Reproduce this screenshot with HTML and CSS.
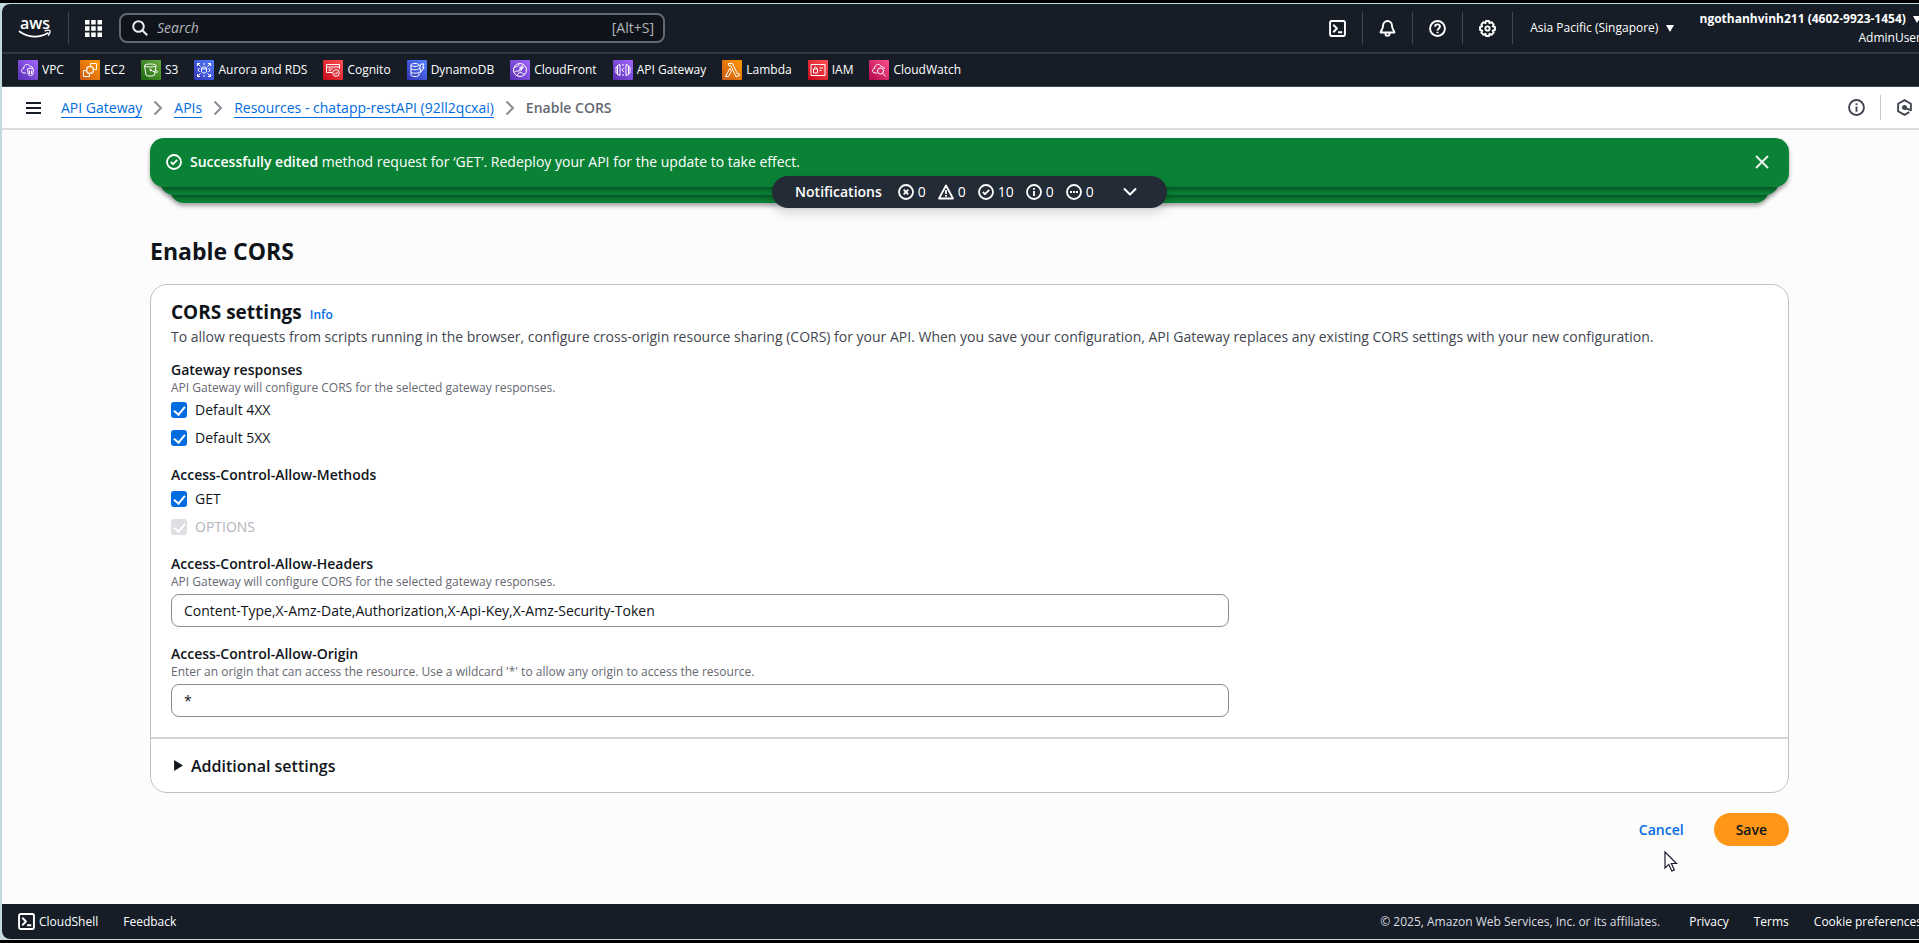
FILE: index.html
```html
<!DOCTYPE html>
<html lang="en">
<head>
<meta charset="utf-8">
<meta name="viewport" content="width=device-width, initial-scale=1">
<title>Enable CORS - API Gateway</title>
<link rel="stylesheet" href="styles.css">
</head>
<body>
<svg class="defs" aria-hidden="true">
  <defs>
    <linearGradient id="g-purple" x1="0" y1="1" x2="1" y2="0"><stop offset="0" stop-color="#5a30b5"/><stop offset="1" stop-color="#a166ff"/></linearGradient>
    <linearGradient id="g-orange" x1="0" y1="1" x2="1" y2="0"><stop offset="0" stop-color="#cc5a18"/><stop offset="1" stop-color="#ff9900"/></linearGradient>
    <linearGradient id="g-green" x1="0" y1="1" x2="1" y2="0"><stop offset="0" stop-color="#1b660f"/><stop offset="1" stop-color="#6cae3e"/></linearGradient>
    <linearGradient id="g-blue" x1="0" y1="1" x2="1" y2="0"><stop offset="0" stop-color="#3334b9"/><stop offset="1" stop-color="#527fff"/></linearGradient>
    <linearGradient id="g-red" x1="0" y1="1" x2="1" y2="0"><stop offset="0" stop-color="#c7081b"/><stop offset="1" stop-color="#ff5252"/></linearGradient>
    <linearGradient id="g-pink" x1="0" y1="1" x2="1" y2="0"><stop offset="0" stop-color="#b0084d"/><stop offset="1" stop-color="#ff4f8b"/></linearGradient>
    <symbol id="i-shell" viewBox="0 0 16 16"><rect x="1" y="1" width="14" height="14" rx="1.5"/><path d="M4 4.500 7.500 8 4 11.500M8.500 11.500h4"/></symbol>
    <symbol id="i-check-circle" viewBox="0 0 16 16"><circle cx="8" cy="8" r="7"/><path d="M4.800 8 7 10.200l4.200-4.400"/></symbol>
    <symbol id="i-info" viewBox="0 0 16 16"><circle cx="8" cy="8" r="7"/><path d="M8 7v5M8 4v1.700"/></symbol>
    <symbol id="i-chevron" viewBox="0 0 16 16"><path d="m4.500 1.500 6.500 6.500-6.500 6.500"/></symbol>
  </defs>
</svg>

<div class="app">
  <header class="topbar">
    <a class="logo" href="#" aria-label="AWS home">
      <svg width="34" height="32" viewBox="0 -6 34 32"><text x="17" y="13" text-anchor="middle" class="logo-text">aws</text><path d="M1.500 15.500c9 6.500 20 6.500 28.500 1.600" fill="none" stroke="#fff" stroke-width="1.700" stroke-linecap="round"/><path d="M27 14.800c2-.7 4-.8 4.700-.2s0 3-1.300 4.700" fill="none" stroke="#fff" stroke-width="1.300" stroke-linecap="round" stroke-linejoin="round"/></svg>
    </a>
    <span class="rule"></span>
    <button class="icon-btn apps" aria-label="Services">
      <svg width="17" height="17" viewBox="0 0 17 17" fill="#fff"><path d="M0 0h4.500v4.500H0zM6.200 0h4.500v4.500H6.200zM12.500 0H17v4.500h-4.500zM0 6.200h4.500v4.500H0zM6.200 6.200h4.500v4.500H6.200zM12.500 6.200H17v4.500h-4.500zM0 12.500h4.500V17H0zM6.200 12.500h4.500V17H6.200zM12.500 12.500H17V17h-4.500z"/></svg>
    </button>
    <label class="search">
      <svg width="16" height="16" viewBox="0 0 16 16" fill="none" stroke="#ebebf0" stroke-width="2"><circle cx="6.500" cy="6.500" r="5.300"/><path d="m10.500 10.500 4.700 4.700"/></svg>
      <input type="text" placeholder="Search" aria-label="Search">
      <span>[Alt+S]</span>
    </label>
    <div class="tools">
      <button class="icon-btn tool" aria-label="CloudShell"><svg class="line" width="17" height="17"><use href="#i-shell"/></svg></button>
      <button class="icon-btn tool" aria-label="Notifications"><svg class="line" width="17" height="17" viewBox="0 0 16 16"><path d="M8 1a4.200 4.200 0 0 0-4.200 4.200C3.800 9 1.500 10 1.500 11.700h13c0-1.700-2.300-2.700-2.300-6.500A4.200 4.200 0 0 0 8 1zM6 12.500c0 3.300 4 3.300 4 0"/></svg></button>
      <button class="icon-btn tool" aria-label="Help"><svg class="line" width="17" height="17" viewBox="0 0 16 16"><circle cx="8" cy="8" r="7"/><path d="M5.700 6.400C5.700 3.300 10.300 3.500 10.300 6.200 10.300 8 8 7.900 8 10M8 11v1.500"/></svg></button>
      <button class="icon-btn tool" aria-label="Settings"><svg class="line" width="17" height="17" viewBox="0 0 16 16"><path d="M6.600 1h2.800l.5 2 1.900-.9 2 2-.9 1.900 2.100.6v2.800l-2.100.6.9 1.900-2 2-1.900-.9-.5 2H6.600l-.5-2-1.900.9-2-2 .9-1.900L1 9.400V6.600L3.100 6l-.9-1.900 2-2 1.900.9z"/><circle cx="8" cy="8" r="2"/></svg></button>
      <button class="region">Asia Pacific (Singapore) <i class="caret"></i></button>
      <button class="account"><b>ngothanhvinh211 (4602-9923-1454) <i class="caret"></i></b><span>AdminUser</span></button>
    </div>
  </header>

  <nav class="favorites" aria-label="Favorites">
    <a href="#"><svg viewBox="0 0 20 20"><rect width="20" height="20" rx="1" fill="url(#g-purple)"/><path d="M8 13H6.200C2.700 13 2.800 8.800 5.700 8.500 5.500 4 11 3 12.200 6.700c1.300-.5 2.300.2 2.500 1.500M9.500 9c2-1 4-1 6 0l-.7 5.500c-1 1.200-3.500 1.200-4.500 0zM11.500 10.500v3.500M13.500 10.500v3.500"/></svg>VPC</a>
    <a href="#"><svg viewBox="0 0 20 20"><rect width="20" height="20" rx="1" fill="url(#g-orange)"/><path d="M6.500 10.500h-3v6h6v-3M10.500 6.500v-3h6v6h-3M7 7h6v6H7zM6 8.500h1M6 11.500h1M8.500 6v1M11.500 6v1M13 8.500h1M13 11.500h1M8.500 13v1M11.500 13v1"/></svg>EC2</a>
    <a href="#"><svg viewBox="0 0 20 20"><rect width="20" height="20" rx="1" fill="url(#g-green)"/><path d="M3.500 5.500c0-2 11.500-2 11.500 0s-11.500 2-11.500 0l1.500 9.500c1 1.500 7.500 1.500 8.500 0L15 5.500M9.500 10c3 1.700 6 2.700 7 2.200s-1-1.700-2.300-2.200"/><circle cx="9.500" cy="10" r=".8"/></svg>S3</a>
    <a href="#"><svg viewBox="0 0 20 20"><rect width="20" height="20" rx="1" fill="url(#g-blue)"/><path d="m3.500 3.500 3 3M3.500 6V3.500H6M16.500 3.500l-3 3M14 3.500h2.500V6M3.500 16.500l3-3M3.500 14v2.500H6M16.500 16.500l-3-3M14 16.500h2.500V14M7.500 8c0-1.300 5-1.300 5 0s-5 1.300-5 0v4c0 1.300 5 1.300 5 0V8M5.500 8 4 10l1.500 2M14.500 8l1.500 2-1.500 2M9 4h2M9 16h2"/></svg>Aurora and RDS</a>
    <a href="#"><svg viewBox="0 0 20 20"><rect width="20" height="20" rx="1" fill="url(#g-red)"/><path d="M9 12.500H3.500v-8h13V9M3.500 7h13M5.500 9h4M5.500 10.700h2.500"/><circle cx="13" cy="13" r="3.300"/><path d="m11.500 13 1.200 1.200 2-2.200"/></svg>Cognito</a>
    <a href="#"><svg viewBox="0 0 20 20"><rect width="20" height="20" rx="1" fill="url(#g-blue)"/><path d="M4 5c0-2 8-2 8 0s-8 2-8 0v10c0 2 8 2 8 0v-2M4 8.300c0 2 8 2 8 0M4 11.700c0 2 8 2 8 0M12 5v1M14 4h3l-1.500 3.500h1.700L13 13l1-4h-1.700z"/></svg>DynamoDB</a>
    <a href="#"><svg viewBox="0 0 20 20"><rect width="20" height="20" rx="1" fill="url(#g-purple)"/><circle cx="10" cy="10" r="6.500"/><path d="M4 7.500c3-2 5 0 5-4M4 12.500c4-4 8 2 8-6 0-1 .5-2 1-2M8 16c-1-2 1-4 3-3.500s2 2.500 4 1.500M8.500 10.500l6-4"/><circle cx="11" cy="8" r="1.200"/></svg>CloudFront</a>
    <a href="#"><svg viewBox="0 0 20 20"><rect width="20" height="20" rx="1" fill="url(#g-purple)"/><path d="M7 4.500 4.500 5.500v9l2.500 1zM4.500 7H3v6h1.500M13 4.500l2.500 1v9l-2.500 1zM15.500 7H17v6h-1.500M10.800 7.800 9 10l1.800 2.200M9 5h2M9 15h2"/></svg>API Gateway</a>
    <a href="#"><svg viewBox="0 0 20 20"><rect width="20" height="20" rx="1" fill="url(#g-orange)"/><path d="M6.500 3.500h4l5 10.500 1.500-.5.500 2-3.500 1.200L8.700 5.500H6.500zM7.800 8.500 3.500 16.500h3l3-5.500z"/></svg>Lambda</a>
    <a href="#"><svg viewBox="0 0 20 20"><rect width="20" height="20" rx="1" fill="url(#g-red)"/><path d="M3 4.500h14v11H3zM5.500 9h4v4h-4zM6.300 9c0-3 2.400-3 2.400 0M11.500 8h3.500M11.500 10.500h2"/></svg>IAM</a>
    <a href="#"><svg viewBox="0 0 20 20"><rect width="20" height="20" rx="1" fill="url(#g-pink)"/><path d="M8 13H6.200C2.700 13 2.800 8.800 5.700 8.500 5.500 4 11 3 12.200 6.700c2-.5 3 .5 3.200 2.300"/><circle cx="11.500" cy="11" r="3"/><path d="m13.700 13.200 3 3.300"/></svg>CloudWatch</a>
  </nav>

  <div class="crumb-bar">
    <button class="icon-btn menu" aria-label="Open navigation"><svg width="16" height="14" viewBox="0 0 16 14" fill="none" stroke="#161d26" stroke-width="2"><path d="M0 2h15M0 7h15M0 12h15"/></svg></button>
    <nav class="crumbs" aria-label="Breadcrumbs">
      <a href="#">API Gateway</a><svg class="sep"><use href="#i-chevron"/></svg>
      <a href="#">APIs</a><svg class="sep"><use href="#i-chevron"/></svg>
      <a href="#">Resources - chatapp-restAPI (92ll2qcxai)</a><svg class="sep"><use href="#i-chevron"/></svg>
      <span>Enable CORS</span>
    </nav>
    <div class="panel-tools">
      <button class="icon-btn panel-tool" aria-label="Info"><svg class="line" width="17" height="17"><use href="#i-info"/></svg></button>
      <button class="icon-btn panel-tool" aria-label="Assistant"><svg class="line" width="17" height="17" viewBox="0 0 16 16"><path d="M12.500 12.300 8 15l-6-3.500v-7L8 1l6 3.500v6.200L9.500 8.500"/><circle cx="8" cy="8" r="1.500" fill="currentColor"/></svg></button>
    </div>
  </div>

  <main class="content">
    <section class="flash-stack" aria-label="Notifications">
      <div class="flash">
        <svg class="line" width="16" height="16"><use href="#i-check-circle"/></svg>
        <p><b>Successfully edited</b> method request for ‘GET’. Redeploy your API for the update to take effect.</p>
        <button class="icon-btn" aria-label="Dismiss"><svg width="14" height="14" viewBox="0 0 14 14" fill="none" stroke="#e6f3e9" stroke-width="2"><path d="m1 1 12 12M13 1 1 13"/></svg></button>
      </div>
      <div class="flash-layer second"></div>
      <div class="flash-layer third"></div>
      <button class="pill">
        <b>Notifications</b>
        <span class="count"><svg class="line" viewBox="0 0 16 16"><circle cx="8" cy="8" r="7"/><path d="m5.700 5.700 4.600 4.600M10.300 5.700l-4.600 4.600"/></svg>0</span>
        <span class="count"><svg class="line" viewBox="0 0 16 16"><path d="M8 1.500 15 14.500H1zM8 6v4M8 11v1.700"/></svg>0</span>
        <span class="count"><svg class="line"><use href="#i-check-circle"/></svg>10</span>
        <span class="count"><svg class="line"><use href="#i-info"/></svg>0</span>
        <span class="count"><svg class="line" viewBox="0 0 16 16"><circle cx="8" cy="8" r="7"/><path d="M4 8h2M7 8h2M10 8h2"/></svg>0</span>
        <svg class="line toggle" viewBox="0 0 16 16"><path d="m2 4.500 6 6 6-6"/></svg>
      </button>
    </section>

    <h1>Enable CORS</h1>

    <form class="card">
      <div class="card-body">
        <div class="card-head">
          <h2>CORS settings</h2><a href="#">Info</a>
        </div>
        <p class="lead">To allow requests from scripts running in the browser, configure cross-origin resource sharing (CORS) for your API. When you save your configuration, API Gateway replaces any existing CORS settings with your new configuration.</p>

        <div class="fields">
          <fieldset>
            <legend>Gateway responses</legend>
            <p class="hint">API Gateway will configure CORS for the selected gateway responses.</p>
            <label class="check"><input type="checkbox" checked>Default 4XX</label>
            <label class="check"><input type="checkbox" checked>Default 5XX</label>
          </fieldset>
          <fieldset>
            <legend>Access-Control-Allow-Methods</legend>
            <label class="check"><input type="checkbox" checked>GET</label>
            <label class="check off"><input type="checkbox" checked disabled>OPTIONS</label>
          </fieldset>
          <div class="field">
            <label for="headers">Access-Control-Allow-Headers</label>
            <p class="hint" id="headers-hint">API Gateway will configure CORS for the selected gateway responses.</p>
            <input type="text" id="headers" aria-describedby="headers-hint" value="Content-Type,X-Amz-Date,Authorization,X-Api-Key,X-Amz-Security-Token">
          </div>
          <div class="field">
            <label for="origin">Access-Control-Allow-Origin</label>
            <p class="hint" id="origin-hint">Enter an origin that can access the resource. Use a wildcard '*' to allow any origin to access the resource.</p>
            <input type="text" id="origin" aria-describedby="origin-hint" value="*">
          </div>
        </div>
      </div>
      <button type="button" class="expander" aria-expanded="false"><svg width="9" height="11" viewBox="0 0 8 10"><path d="M0 0v10l8-5z" fill="currentColor"/></svg>Additional settings</button>
    </form>

    <div class="actions">
      <button class="cancel">Cancel</button>
      <button class="save">Save</button>
    </div>
  </main>

  <footer class="footer">
    <button class="shell"><svg class="line" width="17" height="17"><use href="#i-shell"/></svg>CloudShell</button>
    <a href="#">Feedback</a>
    <span class="legal">© 2025, Amazon Web Services, Inc. or its affiliates.</span>
    <a href="#">Privacy</a>
    <a href="#">Terms</a>
    <a href="#">Cookie preferences</a>
  </footer>
</div>

<svg class="cursor" width="14" height="22" viewBox="0 0 14 22" aria-hidden="true"><path d="M1 1v16l3.800-3.600 3 6.600 2.500-1.100-2.900-6.400h5.100z" fill="#fff" stroke="#1a1c2c" stroke-width="1.200"/></svg>
</body>
</html>
```
FILE: styles.css
```css
* { box-sizing: border-box; }

body {
  margin: 0;
  height: 100vh;
  overflow: hidden;
  background: #c3dadd;
  border-top: 3px solid #000;
  border-bottom: 3px solid #000;
  padding: 1px 0 1px 2px;
  font: 14px/20px "Open Sans", "Noto Sans", sans-serif;
  color: #0f141a;
}

button, input { font: inherit; color: inherit; }
button { border: 0; background: none; padding: 0; cursor: pointer; }
a { color: inherit; text-decoration: none; }
h1, h2, p { margin: 0; }
b { font-weight: 600; }
svg { flex: none; }
.defs { position: absolute; width: 0; height: 0; }
.line { fill: none; stroke: currentColor; stroke-width: 1.8; stroke-linejoin: round; }
.icon-btn { display: grid; place-items: center; }

/* the console is slightly wider than the visible window */
.app {
  width: calc(100% + 18px);
  height: 100%;
  display: flex;
  flex-direction: column;
  background: #fcfcfd;
  border-radius: 8px;
  overflow: hidden;
}

.topbar {
  display: flex;
  align-items: center;
  flex: none;
  height: 50px;
  padding-left: 16px;
  background: #161d26;
  color: #fff;
  border-bottom: 2px solid #333843;
  font-size: 12px;
}
.logo { display: block; height: 36px; }
.logo-text { font: 600 16px "Open Sans", sans-serif; fill: #fff; }
.rule { width: 1px; height: 32px; margin: 0 16px; background: #424650; }
.search {
  display: flex;
  align-items: center;
  gap: 9px;
  width: 546px;
  height: 30px;
  margin-left: 17px;
  padding: 0 9px 0 11px;
  border: 2px solid #656871;
  border-radius: 8px;
  background: #0f141a;
  color: #b4b4bb;
  font-size: 14px;
}
.search input { flex: 1; min-width: 0; border: 0; outline: 0; padding: 0; background: none; }
.search input::placeholder { color: #b4b4bb; font-style: italic; opacity: 1; }
.tools { display: flex; align-items: center; margin-left: auto; padding-right: 16px; }
.tool { width: 50px; height: 32px; border-right: 1px solid #424650; }
.region { margin: 0 26px 0 17px; }
.caret {
  display: inline-block;
  margin-left: 4px;
  border: 4px solid transparent;
  border-top: 7px solid currentColor;
  border-bottom: 0;
}
.account { display: flex; flex-direction: column; align-items: flex-end; line-height: 19px; }
.account b { font-weight: 700; }

.favorites {
  display: flex;
  align-items: center;
  gap: 16px;
  flex: none;
  height: 33px;
  padding-left: 16px;
  background: #161d26;
  border-bottom: 1px solid #424650;
  color: #fff;
  font-size: 12px;
}
.favorites a { display: flex; align-items: center; gap: 4px; }
.favorites svg { width: 20px; height: 20px; fill: none; stroke: #fff; stroke-width: 1; }
.favorites rect { stroke: none; }

.crumb-bar {
  display: flex;
  align-items: center;
  flex: none;
  height: 43px;
  padding: 0 10px 0 24px;
  background: #fff;
  border-bottom: 2px solid #d9d9de;
}
.crumbs { display: flex; align-items: center; gap: 12px; margin-left: 19px; color: #656871; font-weight: 600; }
.crumbs a { color: #006ce0; border-bottom: 1px solid #006ce0; font-weight: 400; line-height: 19px; }
.sep { width: 16px; height: 16px; margin: 0 -4px; fill: none; stroke: #8c8c94; stroke-width: 2; }
.panel-tools { display: flex; margin-left: auto; color: #424650; }
.panel-tool { width: 47px; height: 25px; }
.panel-tool + .panel-tool { border-left: 1px solid #c6c6cd; }

.content { flex: 1; min-height: 0; padding: 8px 148px 0; }

.flash-stack {
  display: grid;
  justify-items: center;
  color: #fff;
}
.flash {
  position: relative;
  z-index: 3;
  justify-self: stretch;
  display: flex;
  align-items: center;
  gap: 8px;
  height: 49px;
  padding: 0 20px 2px 16px;
  border-radius: 14px;
  background: #0a8235;
  box-shadow: 0 3px 4px rgba(0, 0, 0, .35);
}
.flash p { flex: 1; }
.flash-layer {
  position: relative;
  height: 28px;
  margin-top: -20px;
  border-radius: 0 0 14px 14px;
  background: #0a8235;
  box-shadow: 0 3px 4px rgba(0, 0, 0, .35);
}
.second { z-index: 2; width: calc(100% - 20px); }
.third { z-index: 1; width: calc(100% - 40px); }
.pill {
  position: relative;
  z-index: 4;
  display: flex;
  align-items: center;
  gap: 12px;
  height: 32px;
  margin-top: -27px;
  padding: 0 29px 0 23px;
  border-radius: 16px;
  background: #232b37;
  box-shadow: 0 5px 12px rgba(0, 7, 22, .15);
}
.pill b { margin-right: 4px; }
.count { display: flex; align-items: center; gap: 4px; }
.pill svg { width: 16px; height: 16px; }
.pill .toggle { margin-left: 16px; stroke-width: 2; }

h1 { margin-top: 27px; font-size: 23px; line-height: 32px; font-weight: 700; }

.card {
  margin-top: 17px;
  border: 1px solid #c0c1c7;
  border-radius: 17px;
  background: #fff;
}
.card-body { padding: 14px 20px 20px; }
.card-head { display: flex; align-items: baseline; gap: 8px; }
.card-head h2 { font-size: 19px; line-height: 26px; font-weight: 700; }
.card-head a { color: #006ce0; font-size: 12px; font-weight: 600; }
.lead { margin-top: 2px; color: #424650; }

.fields {
  display: grid;
  grid-template-columns: repeat(12, 1fr);
  column-gap: 20px;
  row-gap: 17px;
  margin-top: 13px;
}
.fields > * { grid-column: 1 / span 8; }
fieldset { border: 0; margin: 0; padding: 0; min-width: 0; }
legend, .field label { display: block; padding: 0; font-weight: 600; }
.hint { color: #656871; font-size: 12px; line-height: 16px; }
.check { display: flex; align-items: center; gap: 8px; width: max-content; height: 20px; margin-top: 4px; }
.check + .check { margin-top: 8px; }
.check input {
  appearance: none;
  width: 16px;
  height: 16px;
  margin: 0;
  border-radius: 3px;
  background: #006ce0;
  display: grid;
  place-items: center;
}
.check input::after {
  content: "";
  width: 5px;
  height: 9px;
  margin-bottom: 2px;
  border: solid #fff;
  border-width: 0 2px 2px 0;
  transform: rotate(40deg);
}
.off { color: #b4b4bb; }
.off input { background: #dedee3; }
.field input {
  display: block;
  width: 100%;
  height: 33px;
  margin-top: 4px;
  padding: 0 12px;
  border: 1px solid #8c8c94;
  border-radius: 8px;
  background: #fff;
}
.expander {
  display: flex;
  align-items: center;
  gap: 8px;
  width: 100%;
  height: 55px;
  padding-left: 23px;
  border-top: 2px solid #d4d4d9;
  font-size: 16px;
  font-weight: 600;
}

.actions { display: flex; justify-content: flex-end; gap: 8px; margin-top: 20px; font-weight: 600; }
.actions button { height: 33px; padding: 0 22px; border-radius: 17px; }
.cancel { color: #006ce0; }
.save { background: #ff9617; }

.footer {
  display: flex;
  align-items: center;
  gap: 25px;
  flex: none;
  height: 35px;
  padding: 0 15px 0 16px;
  background: #161d26;
  color: #fff;
  font-size: 12px;
}
.shell { display: flex; align-items: center; gap: 4px; }
.legal { margin-left: auto; margin-right: 4px; color: #dedee3; }

.cursor { position: absolute; left: 1664px; top: 851px; }
```
